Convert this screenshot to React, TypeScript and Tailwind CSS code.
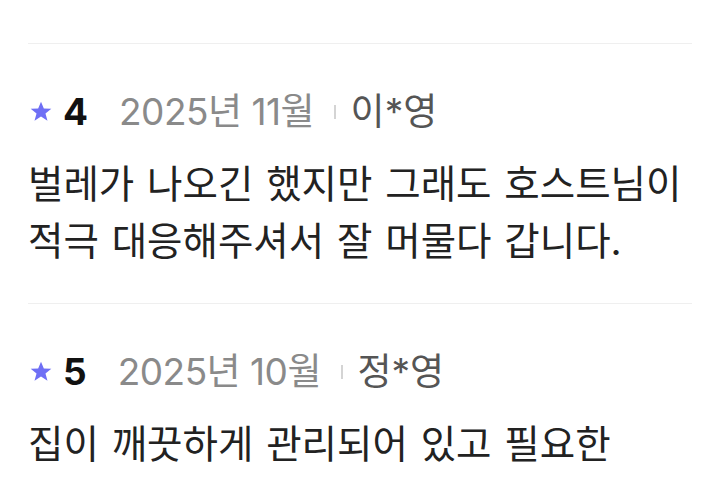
const font = { fontFamily: '"Inter", "Noto Sans CJK KR", sans-serif' };

type Review = { score: number; date: string; name: string; text: string[] };

const reviews: Review[] = [
  {
    score: 4,
    date: "2025년 11월",
    name: "이*영",
    text: ["벌레가 나오긴 했지만 그래도 호스트님이", "적극 대응해주셔서 잘 머물다 갑니다."],
  },
  {
    score: 5,
    date: "2025년 10월",
    name: "정*영",
    text: ["집이 깨끗하게 관리되어 있고 필요한", "물품도 잘 구비되어 있어서 좋았습니다."],
  },
];

function StarIcon() {
  return (
    <svg width="22" height="21" viewBox="0 0 24 23" className="-mt-[2px] shrink-0">
      <polygon
        points="12,0.8 15.1,8.3 23.3,8.6 16.9,13.7 19.1,21.6 12,17.1 4.9,21.6 7.1,13.7 0.7,8.6 8.9,8.3"
        fill="#6f6ff5"
      />
    </svg>
  );
}

function ReviewItem({ review }: { review: Review }) {
  return (
    <div className="border-b border-[#efefef] pt-[48px] pb-[33px]">
      <div className="flex h-[40px] items-center text-[37px]">
        <div className="ml-[2px] flex items-center">
          <StarIcon />
        </div>
        <span className="ml-[11px] font-bold text-[#111]">{review.score}</span>
        <span className="ml-[31px] tracking-[-0.5px] text-[#8a8a8a]">{review.date}</span>
        <span className="ml-[20px] h-[14px] w-[1.5px] bg-[#d4d4d4]" />
        <span className="ml-[15px] text-[#555]">{review.name}</span>
      </div>
      <div className="mt-[24px] text-[38.5px] leading-[57px] text-[#222] [word-spacing:2px]">
        {review.text.map((line) => (
          <div key={line} className="whitespace-nowrap">
            {line}
          </div>
        ))}
      </div>
    </div>
  );
}

export default function App() {
  return (
    <div className="h-[480px] w-[720px] overflow-hidden bg-white" style={font}>
      <div className="mx-[28px]">
        <div className="-mt-[47px] border-b border-[#efefef] pb-[33px] text-[38.5px] leading-[57px] text-[#222] [word-spacing:2px]">
          <div className="whitespace-nowrap">위치도 좋고 조용해서 편하게 쉬었어요.</div>
        </div>
        {reviews.map((r) => (
          <ReviewItem key={r.name} review={r} />
        ))}
      </div>
    </div>
  );
}
